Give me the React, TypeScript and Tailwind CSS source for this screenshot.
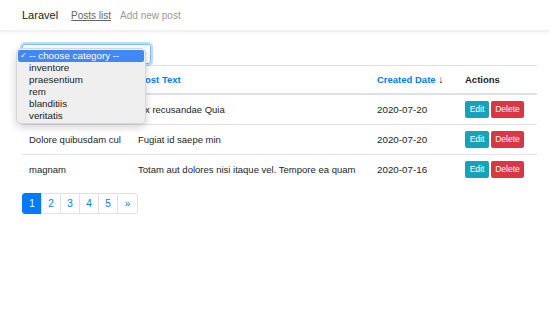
import React from 'react'

const rows = [
  { title: '', text: 'Ex recusandae Quia', date: '2020-07-20' },
  { title: 'Dolore quibusdam cul', text: 'Fugiat id saepe min', date: '2020-07-20' },
  { title: 'magnam', text: 'Totam aut dolores nisi itaque vel. Tempore ea quam', date: '2020-07-16' },
]

const options = ['inventore', 'praesentium', 'rem', 'blanditiis', 'veritatis']

export default function App() {
  return (
    <div
      className="min-h-screen bg-white text-[9.5px] text-[#212529]"
      style={{ fontFamily: '"Liberation Sans", Arial, sans-serif' }}
    >
      {/* navbar */}
      <nav className="h-[31px] flex items-center px-[22px] text-[10px] shadow-[0_1px_3px_rgba(0,0,0,0.08)] border-b border-[#f0f0f0]">
        <span className="text-[11px] text-[#222] mr-[13px]">Laravel</span>
        <a className="underline text-[#666] mr-[9px]">Posts list</a>
        <a className="text-[#999]">Add new post</a>
      </nav>

      <div className="pl-[22px] pr-[13px] pt-[13px]">
        {/* category select, opened */}
        <div className="relative h-[20px] w-[129px]">
          <div className="h-full w-full rounded-[3px] border border-[#80bdff] shadow-[0_0_0_2px_rgba(0,123,255,0.25)] flex items-center justify-end pr-[3px]">
            <svg width="7" height="5" viewBox="0 0 7 5" className="text-[#333]">
              <path d="M1 1l2.5 2.5L6 1" fill="none" stroke="currentColor" strokeWidth="1.2" />
            </svg>
          </div>
          <div className="absolute left-[-6px] top-[4px] w-[130px] rounded-[5px] bg-[#efefef] border border-[#d6d6d6] shadow-[0_3px_8px_rgba(0,0,0,0.18)] p-[1px] z-10 text-[9.8px]">
            <div className="h-[12px] flex items-center bg-[#3f88f6] text-white rounded-[2px]">
              <span className="w-[11px] pl-[2px] text-[8px]">✓</span>
              <span>-- choose category --</span>
            </div>
            {options.map(o => (
              <div key={o} className="h-[12px] flex items-center pl-[11px] text-[#222]">
                {o}
              </div>
            ))}
          </div>
        </div>

        {/* posts table */}
        <table className="w-full table-fixed border-collapse mt-[1px]">
          <colgroup>
            <col className="w-[109px]" />
            <col className="w-[239px]" />
            <col className="w-[88px]" />
            <col />
          </colgroup>
          <thead>
            <tr>
              <th className="text-left font-bold px-[7px] py-[6px] leading-[15px] border-t border-b-2 border-[#dee2e6]" />
              <th className="text-left font-bold px-[7px] py-[6px] leading-[15px] border-t border-b-2 border-[#dee2e6]">
                <a className="text-[#007bff] pl-[7px]">ost Text</a>
              </th>
              <th className="text-left font-bold px-[7px] py-[6px] leading-[15px] border-t border-b-2 border-[#dee2e6] whitespace-nowrap">
                <a className="text-[#007bff]">Created Date</a> <span className="text-[#333] text-[10.5px]">↓</span>
              </th>
              <th className="text-left font-bold px-[7px] py-[6px] leading-[15px] border-t border-b-2 border-[#dee2e6]">
                Actions
              </th>
            </tr>
          </thead>
          <tbody>
            {rows.map((r, i) => (
              <tr key={i}>
                <td className={`align-top px-[7px] py-[7px] leading-[15px] whitespace-nowrap overflow-hidden ${i > 0 ? 'border-t border-[#dee2e6]' : ''}`}>
                  {r.title}
                </td>
                <td className={`align-top px-[7px] py-[7px] leading-[15px] whitespace-nowrap ${i > 0 ? 'border-t border-[#dee2e6]' : ''}`}>
                  {i === 0 ? <span className="pl-[7px]">x recusandae Quia</span> : r.text}
                </td>
                <td className={`align-top px-[7px] py-[7px] leading-[15px] text-[9.8px] ${i > 0 ? 'border-t border-[#dee2e6]' : ''}`}>
                  {r.date}
                </td>
                <td className={`align-top px-[7px] py-[6px] ${i > 0 ? 'border-t border-[#dee2e6]' : ''}`}>
                  <div className="flex gap-[2px]">
                    <button className="h-[17px] w-[24px] rounded-[2px] bg-[#17a2b8] text-white text-[8.5px]">Edit</button>
                    <button className="h-[17px] w-[33px] rounded-[2px] bg-[#dc3545] text-white text-[8.5px]">Delete</button>
                  </div>
                </td>
              </tr>
            ))}
          </tbody>
        </table>

        {/* pagination */}
        <div className="flex mt-[9px] text-[10px]">
          {['1', '2', '3', '4', '5', '»'].map((p, i) => (
            <span
              key={p}
              className={`h-[21px] w-[20px] flex items-center justify-center border ${
                i === 0
                  ? 'bg-[#007bff] border-[#007bff] text-white rounded-l-[3px]'
                  : 'border-[#dee2e6] text-[#007bff] -ml-px'
              } ${i === 5 ? 'rounded-r-[3px] w-[21px]' : ''}`}
            >
              {p}
            </span>
          ))}
        </div>
      </div>
    </div>
  )
}
